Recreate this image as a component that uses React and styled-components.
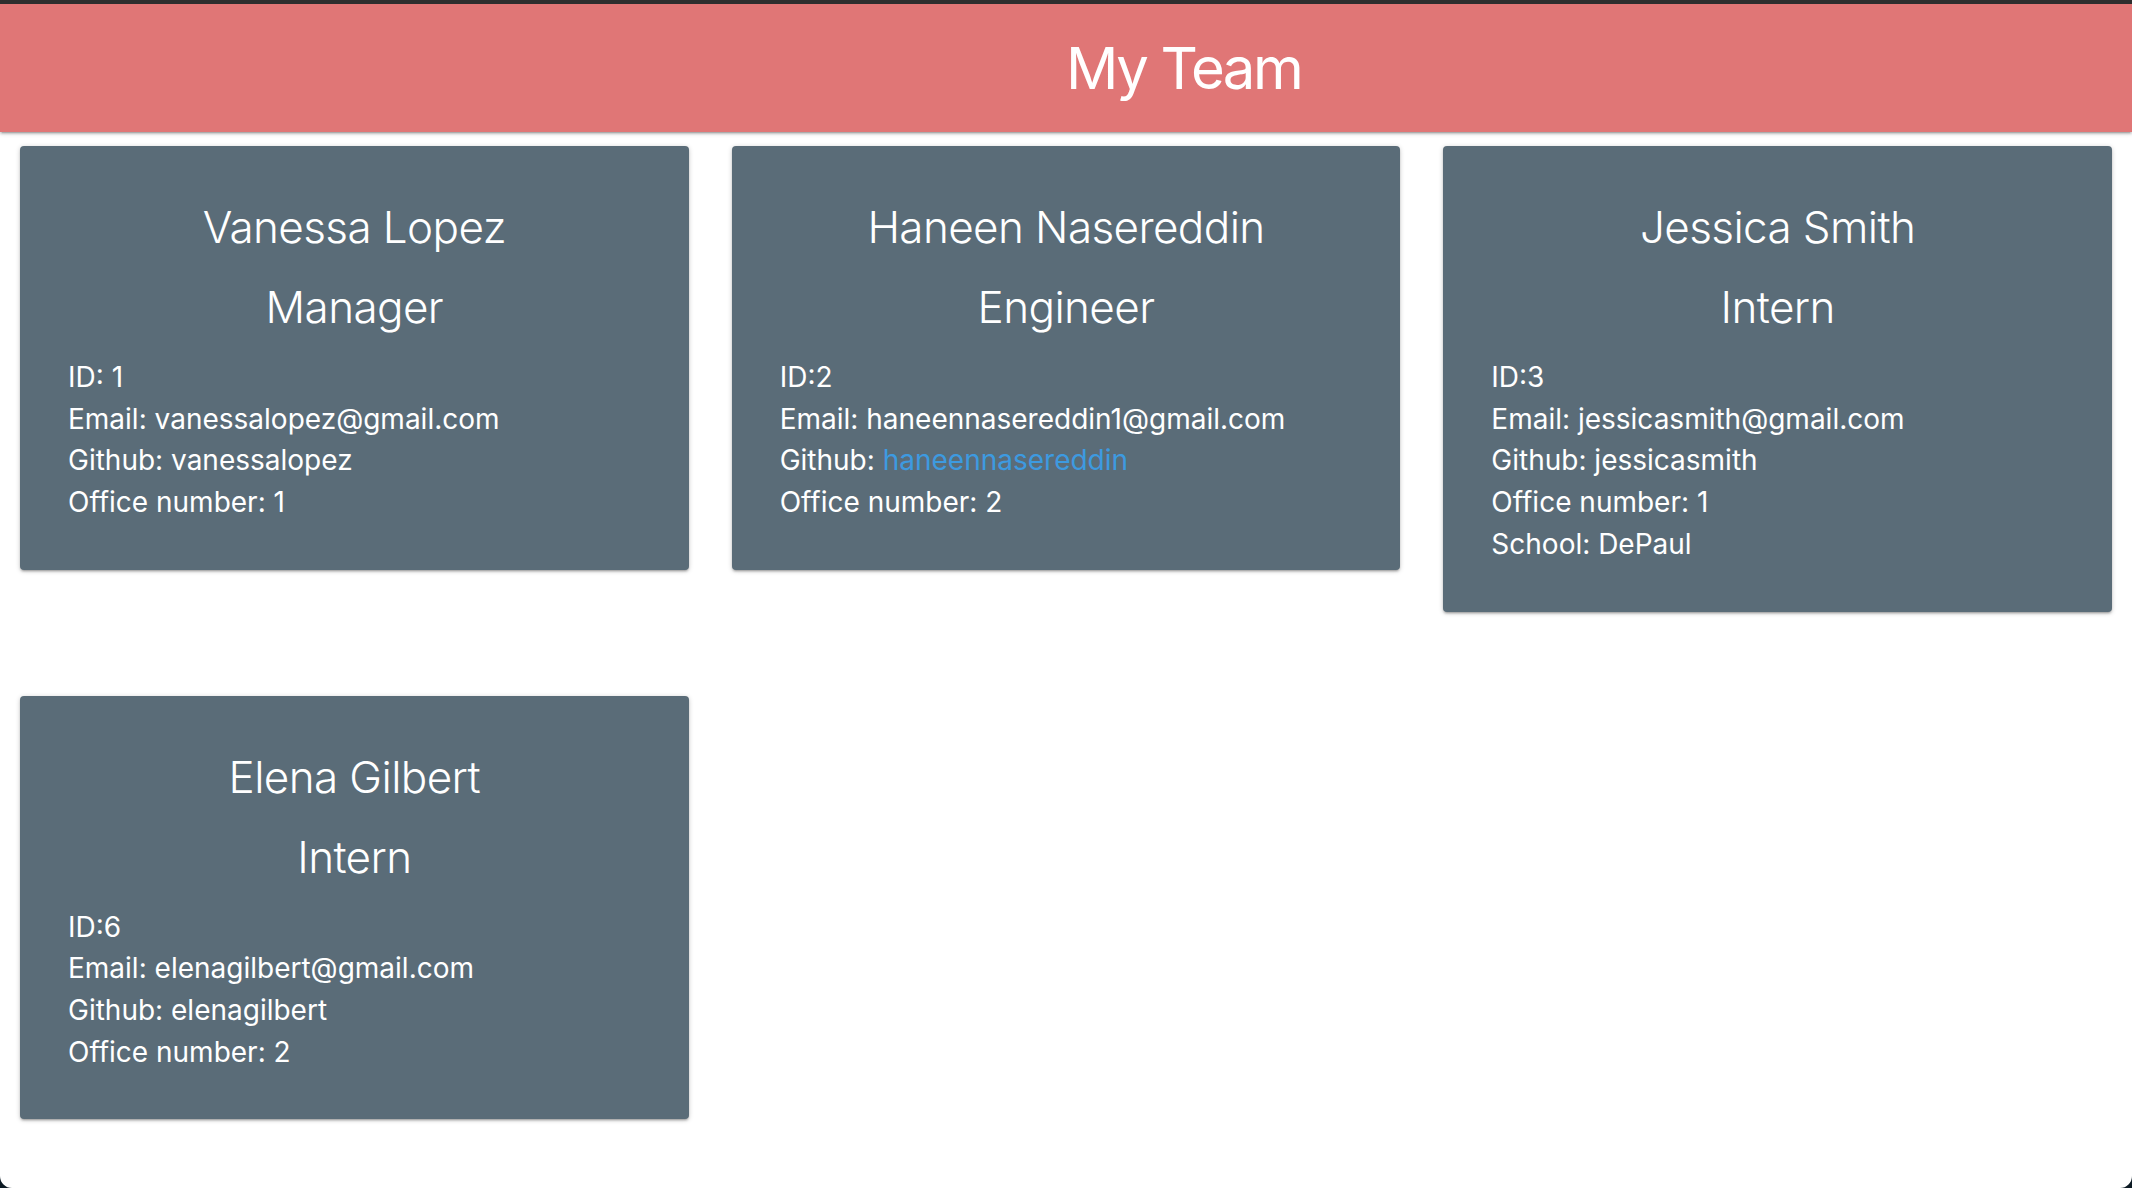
import React from "react";
import styled, { createGlobalStyle } from "styled-components";

const Global = createGlobalStyle`
  html, body { margin: 0; padding: 0; background: #ffffff; }
  body { font-family: Inter, "Liberation Sans", sans-serif; color: #fff; }
  #root { min-height: 1188px; position: relative; overflow: hidden; }
`;

const Page = styled.div`
  min-height: 1188px;
  position: relative;
`;

const Header = styled.header`
  height: 132px;
  border-top: 4px solid #2e2e2e;
  background: #e07676;
  box-shadow: 0 2px 2px 0 rgba(0,0,0,.14), 0 3px 1px -2px rgba(0,0,0,.12), 0 1px 5px 0 rgba(0,0,0,.2);
  display: flex;
  align-items: center;
  padding-left: 50%;
  box-sizing: border-box;
`;

const Title = styled.h1`
  margin: 0;
  font-family: Inter, "Liberation Sans", sans-serif;
  font-weight: 400;
  font-size: 58px;
  line-height: 1;
  color: #fff;
  letter-spacing: -2.4px;
`;

const Grid = styled.main`
  display: grid;
  grid-template-columns: repeat(3, 1fr);
  column-gap: 43px;
  row-gap: 84px;
  align-items: start;
  padding: 14px 20px 0;
`;

const Card = styled.section`
  background: #5a6c78;
  border-radius: 4px;
  box-shadow: 0 2px 2px 0 rgba(0,0,0,.14), 0 3px 1px -2px rgba(0,0,0,.12), 0 1px 5px 0 rgba(0,0,0,.2);
  padding: 48px 48px 46px;
  color: #fff;
`;

const Heading = styled.h2`
  margin: 0 0 ${(p) => p.$after}px;
  text-align: center;
  font-weight: 300;
  font-size: 44px;
  line-height: 66px;
  letter-spacing: -0.6px;
`;

const Line = styled.p`
  margin: 0;
  font-size: 28px;
  line-height: 41.7px;
  letter-spacing: 0;
`;

const Link = styled.a`
  color: #3d9ae0;
  text-decoration: none;
`;

const Corner = styled.svg`
  position: absolute;
  bottom: 0;
  width: 12px;
  height: 12px;
  ${(p) => (p.$side === "left" ? "left: 0;" : "right: 0;")}
`;

const team = [
  {
    name: "Vanessa Lopez",
    role: "Manager",
    lines: ["ID: 1", "Email: vanessalopez@gmail.com", "Github: vanessalopez", "Office number: 1"],
  },
  {
    name: "Haneen Nasereddin",
    role: "Engineer",
    lines: ["ID:2", "Email: haneennasereddin1@gmail.com", { label: "Github: ", link: "haneennasereddin" }, "Office number: 2"],
  },
  {
    name: "Jessica Smith",
    role: "Intern",
    lines: ["ID:3", "Email: jessicasmith@gmail.com", "Github: jessicasmith", "Office number: 1", "School: DePaul"],
  },
  {
    name: "Elena Gilbert",
    role: "Intern",
    lines: ["ID:6", "Email: elenagilbert@gmail.com", "Github: elenagilbert", "Office number: 2"],
  },
];

export default function App() {
  return (
    <Page>
      <Global />
      <Header>
        <Title>My Team</Title>
      </Header>
      <Grid>
        {team.map((m) => (
          <Card key={m.name}>
            <Heading $after={14}>{m.name}</Heading>
            <Heading $after={17}>{m.role}</Heading>
            {m.lines.map((l, i) =>
              typeof l === "string" ? (
                <Line key={i}>{l}</Line>
              ) : (
                <Line key={i}>
                  {l.label}
                  <Link href="#">{l.link}</Link>
                </Line>
              )
            )}
          </Card>
        ))}
      </Grid>
      <Corner $side="left" viewBox="0 0 12 12">
        <path d="M0 0 A12 12 0 0 0 12 12 L0 12 Z" fill="#0d1b24" />
      </Corner>
      <Corner $side="right" viewBox="0 0 12 12">
        <path d="M12 0 A12 12 0 0 1 0 12 L12 12 Z" fill="#0d1b24" />
      </Corner>
    </Page>
  );
}
